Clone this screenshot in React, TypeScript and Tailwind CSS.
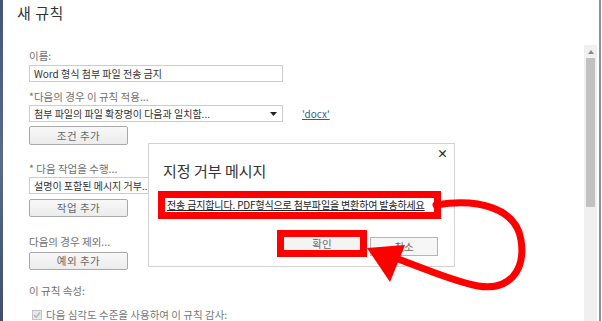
import React from "react";

const Label = ({ text, className = "" }: { text: string; className?: string }) => (
  <div className={`h-[14px] text-[10.5px] leading-[14px] text-[#707070] ${className}`}>{text}</div>
);

const Field = ({ text, arrow, className = "" }: { text: string; arrow?: boolean; className?: string }) => (
  <div
    className={`flex h-[17px] w-[254px] items-center justify-between border border-[#cdcdcd] bg-white pl-[4px] pr-[5px] text-[10px] text-[#333] ${className}`}
  >
    <span className="whitespace-nowrap">{text}</span>
    {arrow && (
      <svg width="7" height="4" viewBox="0 0 7 4">
        <polygon points="0,0 7,0 3.5,4" fill="#222" />
      </svg>
    )}
  </div>
);

const GrayButton = ({ text, className = "" }: { text: string; className?: string }) => (
  <div
    className={`flex w-[99px] items-center justify-center rounded-[2px] border border-[#a9a9a9] bg-gradient-to-b from-[#f8f8f8] to-[#ececec] text-[10.5px] tracking-[0.5px] text-[#666] ${className}`}
  >
    {text}
  </div>
);

export default function App() {
  return (
    <div className="relative flex h-[321px] w-[602px] overflow-hidden bg-white font-['Noto_Sans_CJK_KR','Noto_Sans',sans-serif]">
      <div className="w-[3px] bg-gradient-to-b from-[#44557a] via-[#5a6c8c] to-[#3f4f6d]" />

      <div className="flex flex-1 flex-col">
        <div className="ml-[14px] mt-[3px] h-[20px] text-[15px] leading-[20px] tracking-[0.5px] text-[#333]">새 규칙</div>

        <div className="ml-[26px] flex flex-col">
          <Label text="이름:" className="mt-[26px]" />
          <Field text="Word 형식 첨부 파일 전송 금지" className="mt-[2px]" />

          <Label text="*다음의 경우 이 규칙 적용..." className="mt-[8px]" />
          <div className="mt-[1px] flex items-center gap-[19px]">
            <Field text="첨부 파일의 파일 확장명이 다음과 일치함..." arrow />
            <span className="text-[10px] text-[#2f5f8f] underline">'docx'</span>
          </div>
          <GrayButton text="조건 추가" className="mt-[4px] h-[19px]" />

          <Label text="* 다음 작업을 수행..." className="mt-[17px]" />
          <Field text="설명이 포함된 메시지 거부..." arrow className="mt-[1px]" />
          <GrayButton text="작업 추가" className="mt-[5px] h-[18px]" />

          <Label text="다음의 경우 제외..." className="mt-[18px]" />
          <GrayButton text="예외 추가" className="mt-[3px] h-[18px]" />

          <Label text="이 규칙 속성:" className="mt-[14px]" />
          <div className="mt-[10px] flex h-[14px] items-center gap-[4px] pl-[3px]">
            <div className="flex h-[10px] w-[10px] items-center justify-center border border-[#c4c4c4] bg-[#e8e8e8]">
              <svg width="8" height="8" viewBox="0 0 8 8">
                <path d="M1 4.2 L3.2 6.3 L7 1.5" stroke="#b5b5b5" strokeWidth="1.4" fill="none" />
              </svg>
            </div>
            <span className="whitespace-nowrap text-[10.5px] text-[#777]">다음 심각도 수준을 사용하여 이 규칙 감사:</span>
          </div>
        </div>
      </div>

      <div className="mt-[45px] flex w-[13px] flex-col bg-[#f0f0f0]">
        <div className="flex h-[13px] items-center justify-center">
          <svg width="6" height="4" viewBox="0 0 6 4">
            <polygon points="3,0 6,4 0,4" fill="#8a8a8a" />
          </svg>
        </div>
        <div className="mx-[2px] h-[149px] bg-[#c1c1c1]" />
      </div>
      <div className="ml-[2px] w-[2px] bg-[#8e9297]" />
      <div className="w-[1px]" />

      {/* dialog */}
      <div className="absolute left-[148px] top-[143px] flex h-[124px] w-[307px] flex-col border border-[#d2d2d2] bg-white px-[9px]">
        <div className="absolute right-[6px] top-[4px] text-[11px] font-bold leading-[11px] text-[#222]">×</div>
        <div className="mt-[17px] h-[20px] pl-[5px] text-[15px] leading-[20px] text-[#333]">지정 거부 메시지</div>
        <div className="mt-[10px] h-[28px] w-[283px] overflow-hidden border-[7px] border-[#ff0000] bg-white pl-[2px]">
          <div className="whitespace-nowrap text-[10px] leading-[14px] tracking-[-0.15px] text-[#222] underline">
            전송 금지합니다. PDF형식으로 첨부파일을 변환하여 발송하세요
          </div>
        </div>
        <div className="mt-[11px] flex items-start justify-end gap-[3px] pr-[7px]">
          <div className="flex h-[27px] w-[90px] items-center justify-center border-[7px] border-[#ff0000] bg-[#f4f4f4] text-[10.5px] text-[#666]">
            확인
          </div>
          <div className="mt-[7px] flex h-[19px] w-[68px] items-center justify-center border border-[#b5b5b5] bg-[#f6f6f6] text-[10.5px] text-[#666]">
            취소
          </div>
        </div>
      </div>

      {/* annotation arrow */}
      <svg className="pointer-events-none absolute left-0 top-0" width="602" height="321" viewBox="0 0 602 321">
        <path
          d="M 436 205 C 478 198, 516 208, 521 240 C 526 272, 508 291, 478 286 C 455 282, 428 270, 398 259"
          stroke="#ff0000"
          strokeWidth="7"
          fill="none"
          strokeLinecap="round"
        />
        <polygon points="367,248 405,245 390,282" fill="#ff0000" />
      </svg>
    </div>
  );
}
